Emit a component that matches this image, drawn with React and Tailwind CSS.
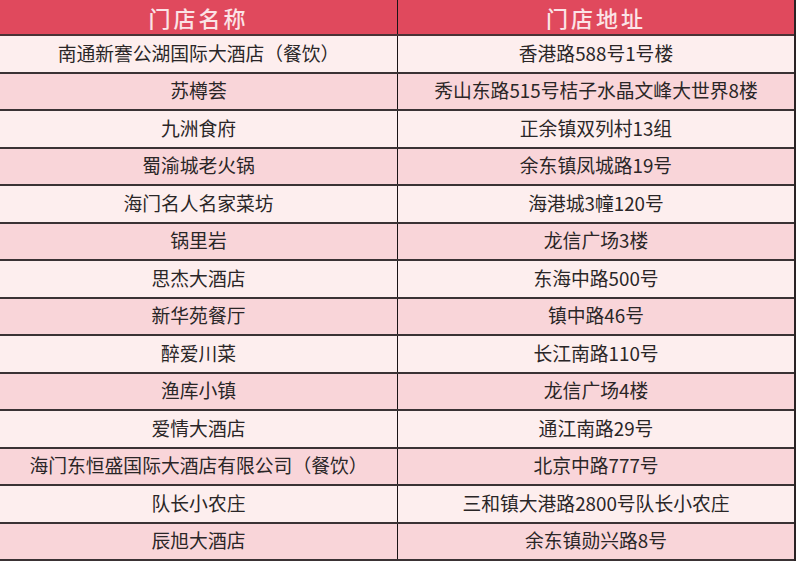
const rows = [
  ["南通新謇公湖国际大酒店（餐饮）", "香港路588号1号楼"],
  ["苏樽荟", "秀山东路515号桔子水晶文峰大世界8楼"],
  ["九洲食府", "正余镇双列村13组"],
  ["蜀渝城老火锅", "余东镇凤城路19号"],
  ["海门名人名家菜坊", "海港城3幢120号"],
  ["锅里岩", "龙信广场3楼"],
  ["思杰大酒店", "东海中路500号"],
  ["新华苑餐厅", "镇中路46号"],
  ["醉爱川菜", "长江南路110号"],
  ["渔库小镇", "龙信广场4楼"],
  ["爱情大酒店", "通江南路29号"],
  ["海门东恒盛国际大酒店有限公司（餐饮）", "北京中路777号"],
  ["队长小农庄", "三和镇大港路2800号队长小农庄"],
  ["辰旭大酒店", "余东镇勋兴路8号"],
]

export default function App() {
  return (
    <div className="w-[800px] h-[563px] bg-white font-['Noto_Sans_CJK_SC','Noto_Sans',sans-serif]">
      <div className="w-[796px] h-[561px] flex flex-col border-r-2 border-[#2a2224]">
        {/* header */}
        <div className="h-[36px] shrink-0 grid grid-cols-[398px_1fr] bg-[#e0495d] border-b-2 border-[#4a3236]">
          <div className="flex items-center justify-center border-r-[1.5px] border-[#1a1416] text-[22px] tracking-[3px] text-[#fbe3e6] font-medium">
            门店名称
          </div>
          <div className="flex items-center justify-center text-[22px] tracking-[3px] text-[#fbe3e6] font-medium">
            门店地址
          </div>
        </div>
        {rows.map(([name, addr], i) => (
          <div
            key={i}
            className={`flex-1 grid grid-cols-[398px_1fr] border-b-2 border-[#3a3234] ${
              i % 2 === 0 ? "bg-[#fdeeee]" : "bg-[#f9d5d9]"
            }`}
          >
            <div className="flex items-center justify-center border-r-[1.5px] border-[#1a1416] text-[18.8px] text-[#2a2627] pb-[2px]">
              {name}
            </div>
            <div className="flex items-center justify-center text-[18.8px] text-[#2a2627] pb-[2px]">{addr}</div>
          </div>
        ))}
      </div>
    </div>
  )
}
